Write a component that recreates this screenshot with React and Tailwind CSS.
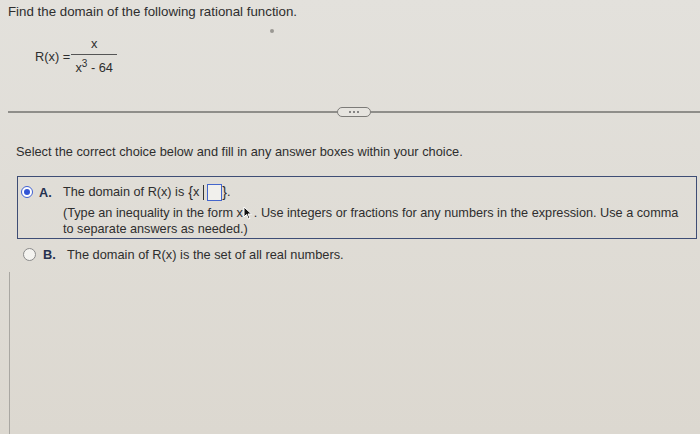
export default function App() {
  return (
    <div
      className="relative w-[700px] h-[434px] overflow-hidden bg-gradient-to-b from-[#e3e1dc] to-[#dcd8d0] text-[#2e2e2e] text-[12.8px] leading-[15px]"
      style={{ fontFamily: '"Liberation Sans", Arial, sans-serif' }}
    >
      {/* question */}
      <div className="pl-[8px] pt-[4px] text-[13.3px]">Find the domain of the following rational function.</div>

      <div className="flex items-center pl-[35px] mt-[18px]">
        <span className="mr-[1px]">R(x) =</span>
        <div className="flex flex-col items-center w-[46px]">
          <span className="leading-[14px] mb-[3px]">x</span>
          <div className="w-full h-px bg-[#555]" />
          <span className="leading-[14px] mt-[6px]">
            x<sup className="text-[10px]">3</sup> - 64
          </span>
        </div>
      </div>

      {/* divider */}
      <div className="flex items-center pl-[8px] mt-[32px]">
        <div className="flex-1 h-[1.5px] bg-[#8f8e8a]" />
        <div className="flex items-center justify-center gap-[2px] w-[34px] h-[10px] rounded-full border border-[#7c7b78] bg-[#e6e4df]">
          <span className="w-[2px] h-[2px] rounded-full bg-[#666]" />
          <span className="w-[2px] h-[2px] rounded-full bg-[#666]" />
          <span className="w-[2px] h-[2px] rounded-full bg-[#666]" />
        </div>
        <div className="flex-1 h-[1.5px] bg-[#8f8e8a]" />
      </div>

      <div className="pl-[16px] mt-[27px]">
        Select the correct choice below and fill in any answer boxes within your choice.
      </div>

      {/* choice A */}
      <div className="ml-[17px] mr-[3px] mt-[17px] border-[1.5px] border-[#3e4d75] pt-[4px] pb-[1px] flex text-[12.7px]">
        <div className="ml-[3px] pt-[5px]">
          <div className="w-[12px] h-[12px] rounded-full border-[1.5px] border-[#3f5fd0] bg-white flex items-center justify-center">
            <div className="w-[6px] h-[6px] rounded-full bg-[#3356d6]" />
          </div>
        </div>
        <span className="font-bold ml-[6px] pt-[5px] w-[24px] text-[#26314f]">A.</span>
        <div>
          <div className="flex items-center h-[22px]">
            <span>The domain of R(x) is</span>
            <span className="ml-[4px] text-[14px] font-light">{'{'}</span>
            <span>x</span>
            <span className="ml-[4px] w-px h-[15px] bg-[#333]" />
            <span className="ml-[3px] w-[15px] h-[17px] border-[1.5px] border-[#4466cc] bg-[#f1f0ec]" />
            <span className="text-[14px] font-light">{'}'}</span>
            <span>.</span>
          </div>
          <div className="mt-[2px] leading-[16px]">
            (Type an inequality in the form x
            <svg className="inline-block align-[-3px]" width="11" height="14" viewBox="0 0 11 14">
              <path d="M1 1 L1 11 L3.5 8.5 L5.5 13 L7 12.3 L5 8 L8.5 8 Z" fill="#111" stroke="#fff" strokeWidth="1" />
            </svg>
            . Use integers or fractions for any numbers in the expression. Use a comma
          </div>
          <div className="leading-[16px]">to separate answers as needed.)</div>
        </div>
      </div>

      {/* choice B */}
      <div className="flex items-center ml-[23px] mt-[8px]">
        <div className="w-[13px] h-[13px] rounded-full border-[1.5px] border-[#8a8a8a] bg-[#f4f3f0]" />
        <span className="font-bold ml-[7px] w-[24px] text-[#26314f]">B.</span>
        <span>The domain of R(x) is the set of all real numbers.</span>
      </div>

      {/* faint edge of the page frame */}
      <div className="absolute left-[9px] top-[272px] bottom-0 w-px bg-[#a9a7a2]" />
      <div className="absolute left-[270px] top-[29px] w-[4px] h-[4px] rounded-full bg-[#9a9893]" />
    </div>
  )
}
